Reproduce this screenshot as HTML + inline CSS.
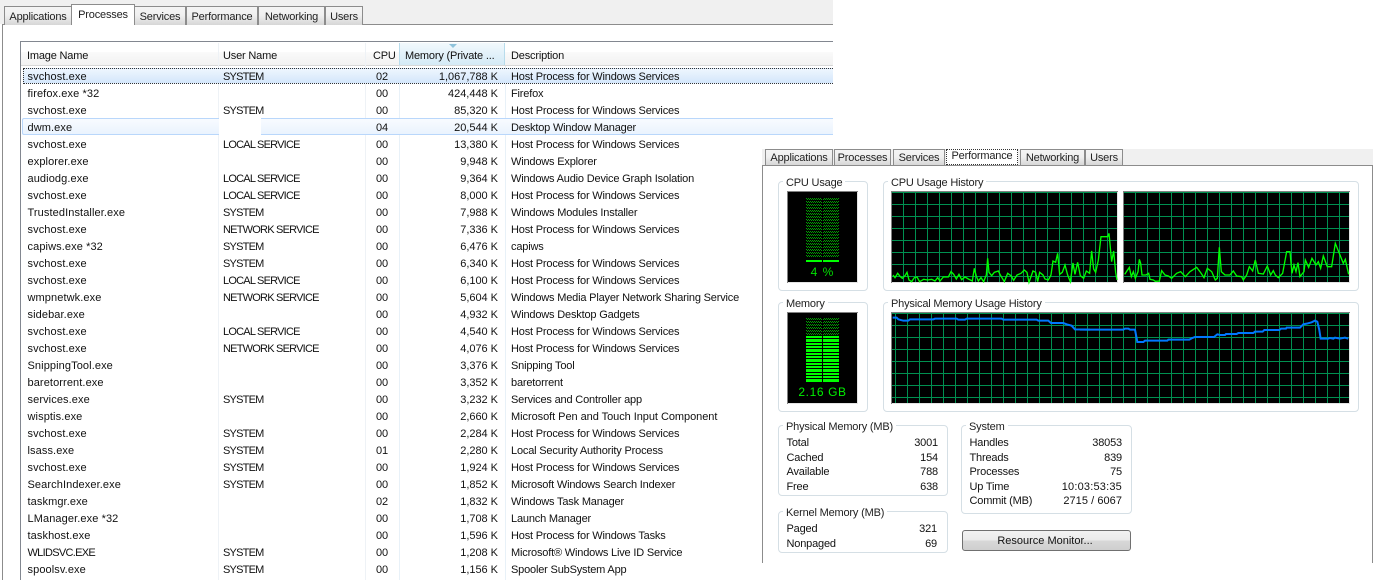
<!DOCTYPE html>
<html><head><meta charset="utf-8"><style>
html,body{margin:0;padding:0;background:#fff;width:1383px;height:580px;overflow:hidden}
body{position:relative;font:11px/16px "Liberation Sans",sans-serif;letter-spacing:-.18px;color:#111}
div,span{position:absolute;white-space:nowrap}
.t{box-sizing:border-box;height:19px;border:1px solid #8c8c8c;border-bottom:0;background:linear-gradient(#f4f4f4,#f0f0f0 45%,#d6d6d6);text-align:center;line-height:20px;color:#222}
.on{background:#fff;z-index:2}
.r{left:0;width:833px;height:17px}
.r span{top:1px}
.a{left:27.5px;letter-spacing:.1px}.b{left:223px;letter-spacing:-.78px}.c{left:376px}.d{right:335px;letter-spacing:-.02px}.e{left:511px}
.u{letter-spacing:-.7px}
.g{box-sizing:border-box;border:1px solid #d5dfe5;border-radius:4px}
.v{text-align:right}
</style></head><body>

<!-- LEFT WINDOW -->
<div style="left:0;top:0;width:833px;height:24px;background:#f0f0f0"></div>
<div style="left:2px;top:24px;width:831px;height:1px;background:#8c8c8c"></div>
<div style="left:2px;top:24px;width:1px;height:556px;background:#8c8c8c"></div>
<div class="t" style="left:4px;top:6px;width:68px">Applications</div>
<div class="t" style="left:134px;top:6px;width:52px">Services</div>
<div class="t" style="left:186px;top:6px;width:72px">Performance</div>
<div class="t" style="left:258px;top:6px;width:67px">Networking</div>
<div class="t" style="left:325px;top:6px;width:38px">Users</div>
<div class="t on" style="left:71px;top:4px;width:64px;height:21px;line-height:20px">Processes</div>

<div style="left:20px;top:41px;width:813px;height:1px;background:#828790"></div>
<div style="left:20px;top:41px;width:1px;height:539px;background:#828790"></div>
<div style="left:21px;top:52px;width:812px;height:13px;background:linear-gradient(#fafafa,#f2f2f2)"></div>
<div style="left:21px;top:65px;width:812px;height:1px;background:#d8d8d8"></div>
<div style="left:399px;top:43px;width:106px;height:22px;box-sizing:border-box;border-left:1px solid #b8dcec;border-right:1px solid #b8dcec;background:linear-gradient(#f2f9fd,#e4f2fa 45%,#d4eaf6)"></div>
<div style="left:449px;top:44px;width:0;height:0;border-left:4px solid transparent;border-right:4px solid transparent;border-top:4px solid #8fc3dc"></div>
<div style="left:27px;top:48px">Image Name</div>
<div style="left:223px;top:48px">User Name</div>
<div style="left:373px;top:48px">CPU</div>
<div style="left:405px;top:48px">Memory (Private ...</div>
<div style="left:511px;top:48px">Description</div>
<div style="left:218px;top:43px;width:1px;height:537px;background:#eef2f6"></div>
<div style="left:365px;top:43px;width:1px;height:537px;background:#eef2f6"></div>
<div style="left:399px;top:66px;width:1px;height:514px;background:#e8f1f8"></div>
<div style="left:505px;top:66px;width:1px;height:514px;background:#e8f1f8"></div>

<div style="left:23px;top:68px;width:810px;height:16px;box-sizing:border-box;border:1px dotted #333;border-right:0;background:linear-gradient(#eef6fe,#d3e6fb)"></div>
<div style="left:22px;top:118px;width:811px;height:17px;box-sizing:border-box;border:1px solid #b9d7fb;border-right:0;border-radius:2px 0 0 2px;background:linear-gradient(#f8fbff,#eaf3fe)"></div>
<div style="left:219px;top:84px;width:38px;height:3px;background:#fff"></div>
<div style="left:219px;top:118px;width:42px;height:22px;background:#fff"></div>

<div class="r" style="top:68px"><span class="a">svchost.exe</span><span class="b">SYSTEM</span><span class="c">02</span><span class="d">1,067,788 K</span><span class="e">Host Process for Windows Services</span></div>
<div class="r" style="top:85px"><span class="a">firefox.exe *32</span><span class="c">00</span><span class="d">424,448 K</span><span class="e">Firefox</span></div>
<div class="r" style="top:102px"><span class="a">svchost.exe</span><span class="b">SYSTEM</span><span class="c">00</span><span class="d">85,320 K</span><span class="e">Host Process for Windows Services</span></div>
<div class="r" style="top:119px"><span class="a">dwm.exe</span><span class="c">04</span><span class="d">20,544 K</span><span class="e">Desktop Window Manager</span></div>
<div class="r" style="top:136px"><span class="a">svchost.exe</span><span class="b">LOCAL SERVICE</span><span class="c">00</span><span class="d">13,380 K</span><span class="e">Host Process for Windows Services</span></div>
<div class="r" style="top:153px"><span class="a">explorer.exe</span><span class="c">00</span><span class="d">9,948 K</span><span class="e">Windows Explorer</span></div>
<div class="r" style="top:170px"><span class="a">audiodg.exe</span><span class="b">LOCAL SERVICE</span><span class="c">00</span><span class="d">9,364 K</span><span class="e">Windows Audio Device Graph Isolation</span></div>
<div class="r" style="top:187px"><span class="a">svchost.exe</span><span class="b">LOCAL SERVICE</span><span class="c">00</span><span class="d">8,000 K</span><span class="e">Host Process for Windows Services</span></div>
<div class="r" style="top:204px"><span class="a">TrustedInstaller.exe</span><span class="b">SYSTEM</span><span class="c">00</span><span class="d">7,988 K</span><span class="e">Windows Modules Installer</span></div>
<div class="r" style="top:221px"><span class="a">svchost.exe</span><span class="b">NETWORK SERVICE</span><span class="c">00</span><span class="d">7,336 K</span><span class="e">Host Process for Windows Services</span></div>
<div class="r" style="top:238px"><span class="a">capiws.exe *32</span><span class="b">SYSTEM</span><span class="c">00</span><span class="d">6,476 K</span><span class="e">capiws</span></div>
<div class="r" style="top:255px"><span class="a">svchost.exe</span><span class="b">SYSTEM</span><span class="c">00</span><span class="d">6,340 K</span><span class="e">Host Process for Windows Services</span></div>
<div class="r" style="top:272px"><span class="a">svchost.exe</span><span class="b">LOCAL SERVICE</span><span class="c">00</span><span class="d">6,100 K</span><span class="e">Host Process for Windows Services</span></div>
<div class="r" style="top:289px"><span class="a">wmpnetwk.exe</span><span class="b">NETWORK SERVICE</span><span class="c">00</span><span class="d">5,604 K</span><span class="e">Windows Media Player Network Sharing Service</span></div>
<div class="r" style="top:306px"><span class="a">sidebar.exe</span><span class="c">00</span><span class="d">4,932 K</span><span class="e">Windows Desktop Gadgets</span></div>
<div class="r" style="top:323px"><span class="a">svchost.exe</span><span class="b">LOCAL SERVICE</span><span class="c">00</span><span class="d">4,540 K</span><span class="e">Host Process for Windows Services</span></div>
<div class="r" style="top:340px"><span class="a">svchost.exe</span><span class="b">NETWORK SERVICE</span><span class="c">00</span><span class="d">4,076 K</span><span class="e">Host Process for Windows Services</span></div>
<div class="r" style="top:357px"><span class="a">SnippingTool.exe</span><span class="c">00</span><span class="d">3,376 K</span><span class="e">Snipping Tool</span></div>
<div class="r" style="top:374px"><span class="a">baretorrent.exe</span><span class="c">00</span><span class="d">3,352 K</span><span class="e">baretorrent</span></div>
<div class="r" style="top:391px"><span class="a">services.exe</span><span class="b">SYSTEM</span><span class="c">00</span><span class="d">3,232 K</span><span class="e">Services and Controller app</span></div>
<div class="r" style="top:408px"><span class="a">wisptis.exe</span><span class="c">00</span><span class="d">2,660 K</span><span class="e" style="letter-spacing:-.05px">Microsoft Pen and Touch Input Component</span></div>
<div class="r" style="top:425px"><span class="a">svchost.exe</span><span class="b">SYSTEM</span><span class="c">00</span><span class="d">2,284 K</span><span class="e">Host Process for Windows Services</span></div>
<div class="r" style="top:442px"><span class="a">lsass.exe</span><span class="b">SYSTEM</span><span class="c">01</span><span class="d">2,280 K</span><span class="e">Local Security Authority Process</span></div>
<div class="r" style="top:459px"><span class="a">svchost.exe</span><span class="b">SYSTEM</span><span class="c">00</span><span class="d">1,924 K</span><span class="e">Host Process for Windows Services</span></div>
<div class="r" style="top:476px"><span class="a">SearchIndexer.exe</span><span class="b">SYSTEM</span><span class="c">00</span><span class="d">1,852 K</span><span class="e">Microsoft Windows Search Indexer</span></div>
<div class="r" style="top:493px"><span class="a">taskmgr.exe</span><span class="c">02</span><span class="d">1,832 K</span><span class="e">Windows Task Manager</span></div>
<div class="r" style="top:510px"><span class="a">LManager.exe *32</span><span class="c">00</span><span class="d">1,708 K</span><span class="e">Launch Manager</span></div>
<div class="r" style="top:527px"><span class="a">taskhost.exe</span><span class="c">00</span><span class="d">1,596 K</span><span class="e">Host Process for Windows Tasks</span></div>
<div class="r" style="top:544px"><span class="a u">WLIDSVC.EXE</span><span class="b">SYSTEM</span><span class="c">00</span><span class="d">1,208 K</span><span class="e">Microsoft® Windows Live ID Service</span></div>
<div class="r" style="top:561px"><span class="a">spoolsv.exe</span><span class="b">SYSTEM</span><span class="c">00</span><span class="d">1,156 K</span><span class="e">Spooler SubSystem App</span></div>

<!-- RIGHT WINDOW -->
<div style="left:762px;top:149px;width:611px;height:414px;background:#fff;z-index:3">
  <div style="left:0;top:0;width:611px;height:16px;background:#f0f0f0"></div>
  <div style="left:0;top:16px;width:611px;height:1px;background:#8c8c8c"></div>
  <div style="left:0;top:16px;width:1px;height:398px;background:#8c8c8c"></div>
  <div style="left:610px;top:16px;width:1px;height:398px;background:#8c8c8c"></div>
  <div class="t" style="left:3px;top:0;width:68px;height:16px;line-height:16px">Applications</div>
  <div class="t" style="left:72px;top:0;width:57px;height:16px;line-height:16px">Processes</div>
  <div class="t" style="left:131px;top:0;width:52px;height:16px;line-height:16px">Services</div>
  <div class="t" style="left:184px;top:0;width:72px;height:16px;line-height:12px;background:#fff;border:1px dotted #333">Performance</div>
  <div class="t" style="left:258px;top:0;width:65px;height:16px;line-height:16px">Networking</div>
  <div class="t" style="left:323px;top:0;width:38px;height:16px;line-height:16px">Users</div>
</div>

<div style="left:0;top:0;width:1383px;height:580px;z-index:4">
<svg width="1383" height="580" style="position:absolute;left:0;top:0">
<defs>
<pattern id="g1" patternUnits="userSpaceOnUse" x="903" y="204" width="12" height="12"><rect width="12" height="1" fill="#009050"/><rect width="1" height="12" fill="#009050"/></pattern>
<pattern id="g2" patternUnits="userSpaceOnUse" x="1135" y="204" width="12" height="12"><rect width="12" height="1" fill="#009050"/><rect width="1" height="12" fill="#009050"/></pattern>
<pattern id="g3" patternUnits="userSpaceOnUse" x="895" y="325" width="12" height="12"><rect width="12" height="1" fill="#009050"/><rect width="1" height="12" fill="#009050"/></pattern>
<pattern id="dim" patternUnits="userSpaceOnUse" x="0" y="0" width="2" height="3"><rect width="1" height="1" fill="#00a000"/><rect x="1" y="1" width="1" height="1" fill="#00a000"/></pattern>
<pattern id="solid" patternUnits="userSpaceOnUse" x="0" y="336" width="16" height="10"><rect width="16" height="2" fill="#0f0"/><rect y="3" width="16" height="3" fill="#0f0"/><rect y="7" width="16" height="2" fill="#0f0"/></pattern>
</defs>
<g shape-rendering="crispEdges">
<rect x="891" y="191" width="227" height="92" fill="#e4e4e4"/><rect x="891" y="191" width="227" height="1" fill="#808080"/><rect x="891" y="191" width="1" height="92" fill="#808080"/><rect x="892" y="192" width="225" height="90" fill="#000"/><rect x="892" y="192" width="225" height="90" fill="url(#g1)"/>
<rect x="1123" y="191" width="227" height="92" fill="#e4e4e4"/><rect x="1123" y="191" width="227" height="1" fill="#808080"/><rect x="1123" y="191" width="1" height="92" fill="#808080"/><rect x="1124" y="192" width="225" height="90" fill="#000"/><rect x="1124" y="192" width="225" height="90" fill="url(#g2)"/>
<rect x="891" y="312" width="459" height="92" fill="#e4e4e4"/><rect x="891" y="312" width="459" height="1" fill="#808080"/><rect x="891" y="312" width="1" height="92" fill="#808080"/><rect x="892" y="313" width="457" height="90" fill="#000"/><rect x="892" y="313" width="457" height="90" fill="url(#g3)"/>

<rect x="787" y="191" width="71" height="92" fill="#e4e4e4"/><rect x="787" y="191" width="71" height="1" fill="#808080"/><rect x="787" y="191" width="1" height="92" fill="#808080"/><rect x="788" y="192" width="69" height="90" fill="#000"/>
<rect x="806" y="197" width="16" height="61" fill="url(#dim)"/><rect x="823" y="197" width="16" height="61" fill="url(#dim)"/>
<rect x="806" y="260" width="16" height="2" fill="#0f0"/><rect x="823" y="260" width="16" height="2" fill="#0f0"/>

<rect x="787" y="312" width="71" height="92" fill="#e4e4e4"/><rect x="787" y="312" width="71" height="1" fill="#808080"/><rect x="787" y="312" width="1" height="92" fill="#808080"/><rect x="788" y="313" width="69" height="90" fill="#000"/>
<rect x="806" y="318" width="16" height="17" fill="url(#dim)"/><rect x="823" y="318" width="16" height="17" fill="url(#dim)"/>
<rect x="806" y="336" width="16" height="47" fill="url(#solid)"/><rect x="823" y="336" width="16" height="47" fill="url(#solid)"/>
</g>
<g fill="none" stroke="#00ff00" stroke-width="4" transform="translate(885 185) scale(.3333)">
<polyline points="24,270 30,278 38,265 46,275 52,280 60,272 66,262 72,285 80,290 88,278 96,276 104,290 116,283 128,285 140,283 150,288 158,278 165,288 175,276 190,276 198,260 206,268 214,282 222,268 230,284 240,276 250,282 262,288 268,250 274,274 280,288 288,278 296,290 304,270 308,220 312,262 320,272 328,262 340,258 346,270 358,290 368,265 378,272 386,286 396,270 408,265 418,255 426,262 432,292 444,258 452,262 458,290 464,262 474,270 480,282 490,285 498,270 504,228 512,232 518,205 524,268 532,262 540,240 548,270 556,290 564,234 570,268 578,232 586,272 596,280 604,258 614,265 620,198 626,252 632,262 640,226 648,155 668,155 672,145 680,230 686,198 692,262 696,285"/>
</g>
<g fill="none" stroke="#00ff00" stroke-width="4" transform="translate(1110 140) scale(.3333)">
<polyline points="44,403 58,382 64,410 70,395 76,415 84,395 88,358 92,370 96,405 108,405 116,400 120,418 130,420 136,424 148,423 155,392 165,405 175,408 185,415 200,400 212,395 226,410 240,395 260,382 272,398 282,413 292,385 305,395 316,420 322,415 328,322 334,395 345,405 360,405 370,393 380,408 395,410 400,420 410,405 418,380 428,393 436,360 445,400 460,402 472,378 482,405 490,392 496,405 505,413 518,400 530,335 540,335 546,400 552,375 558,395 564,368 570,410 582,395 586,360 596,382 606,355 618,375 625,365 632,385 640,348 652,380 665,380 676,310 690,345 700,370 706,358 716,403"/>
</g>
<g fill="none" stroke="#0078ff" stroke-width="6" transform="translate(770 295) scale(.3333)">
<polyline points="368,68 380,68 385,73 400,77 415,77 420,73 490,73 495,71 560,71 565,74 585,74 590,71 695,71 700,74 800,74 805,77 835,77 843,84 880,84 890,88 905,92 915,103 960,104"/>
</g>
<g fill="none" stroke="#0078ff" stroke-width="6" transform="translate(1080 295) scale(.3333)">
<polyline points="0,104 130,104 135,101 145,101 150,104 165,104 170,130 172,141 190,141 195,137 262,137 265,134 328,134 335,130 345,126 402,126 412,118 420,120 435,120 438,117 470,117 475,114 520,114 525,110 548,110 553,105 598,105 603,101 618,101 620,98 660,98 670,88 680,86 695,82 705,77 712,80 718,105 722,131 745,131 750,129 760,131 765,128 780,131 795,128 805,131"/>
</g>
</svg>

<div style="left:788px;top:264px;width:69px;text-align:center;color:#00e000;font-size:12px;letter-spacing:1px">4 %</div>
<div style="left:788px;top:384px;width:69px;text-align:center;color:#00f000;font-size:12px;letter-spacing:.6px">2.16 GB</div>

<div class="g" style="left:778px;top:181px;width:90px;height:110px;z-index:-1"></div>
<div class="g" style="left:883px;top:181px;width:476px;height:110px;z-index:-1"></div>
<div class="g" style="left:778px;top:302px;width:90px;height:110px;z-index:-1"></div>
<div class="g" style="left:883px;top:302px;width:476px;height:110px;z-index:-1"></div>
<div style="left:783px;top:175px;background:#fff;padding:0 3px;color:#222">CPU Usage</div>
<div style="left:888px;top:175px;background:#fff;padding:0 3px;color:#222">CPU Usage History</div>
<div style="left:783px;top:296px;background:#fff;padding:0 3px;color:#222">Memory</div>
<div style="left:888px;top:296px;background:#fff;padding:0 3px;color:#222">Physical Memory Usage History</div>

<div class="g" style="left:778px;top:425px;width:170px;height:71px"></div>
<div class="g" style="left:778px;top:511px;width:170px;height:42px"></div>
<div class="g" style="left:961px;top:425px;width:171px;height:89px"></div>
<div style="left:783px;top:419px;background:#fff;padding:0 3px;color:#222">Physical Memory (MB)</div>
<div style="left:783px;top:505px;background:#fff;padding:0 3px;color:#222">Kernel Memory (MB)</div>
<div style="left:966px;top:419px;background:#fff;padding:0 3px;color:#222">System</div>

<div style="left:786.5px;top:435px">Total</div><div class="v" style="right:445px;top:435px">3001</div>
<div style="left:786.5px;top:450px">Cached</div><div class="v" style="right:445px;top:450px">154</div>
<div style="left:786.5px;top:464px">Available</div><div class="v" style="right:445px;top:464px">788</div>
<div style="left:786.5px;top:479px">Free</div><div class="v" style="right:445px;top:479px">638</div>
<div style="left:786.5px;top:521px">Paged</div><div class="v" style="right:446px;top:521px">321</div>
<div style="left:786.5px;top:536px">Nonpaged</div><div class="v" style="right:446px;top:536px">69</div>

<div style="left:969.5px;top:435px">Handles</div><div class="v" style="right:261px;top:435px">38053</div>
<div style="left:969.5px;top:450px">Threads</div><div class="v" style="right:261px;top:450px">839</div>
<div style="left:969.5px;top:464px">Processes</div><div class="v" style="right:261px;top:464px">75</div>
<div style="left:969.5px;top:479px">Up Time</div><div class="v" style="right:261px;top:479px;letter-spacing:.2px">10:03:53:35</div>
<div style="left:969.5px;top:493px">Commit (MB)</div><div class="v" style="right:261px;top:493px;letter-spacing:.05px">2715 / 6067</div>

<div style="left:962px;top:530px;width:169px;height:21px;box-sizing:border-box;border:1px solid #707070;border-radius:3px;background:linear-gradient(#f2f2f2,#ebebeb 48%,#d8d8d8 52%,#cfcfcf);text-align:center;line-height:21px;color:#111;letter-spacing:0;padding-right:3px">Resource Monitor...</div>
</div>
</body></html>
